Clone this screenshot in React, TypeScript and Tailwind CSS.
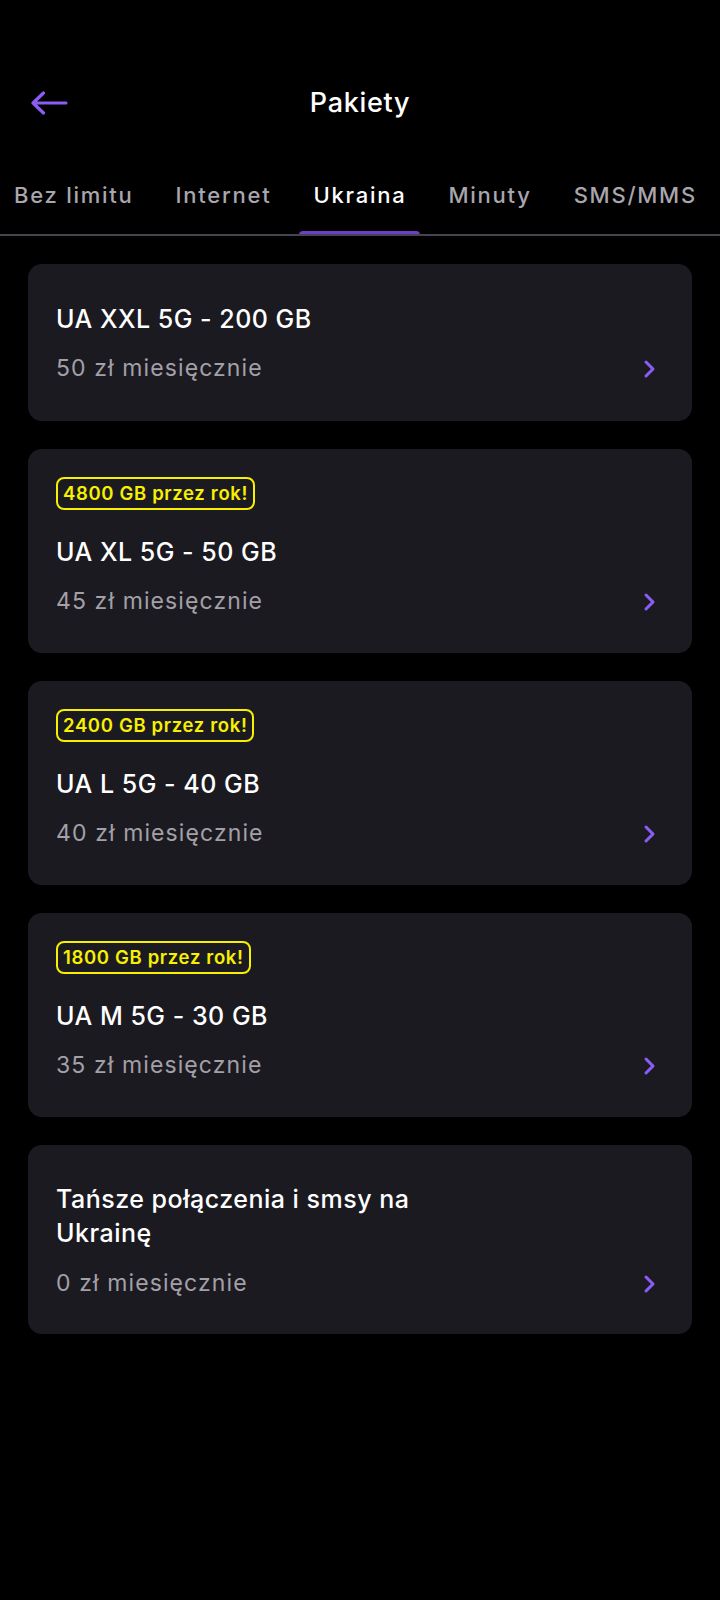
import React from "react";

const tabs = ["Bez limitu", "Internet", "Ukraina", "Minuty", "SMS/MMS"];

type Pkg = { badge?: string; title: React.ReactNode; price: string };

const pkgs: Pkg[] = [
  { title: "UA XXL 5G - 200 GB", price: "50 zł miesięcznie" },
  { badge: "4800 GB przez rok!", title: "UA XL 5G - 50 GB", price: "45 zł miesięcznie" },
  { badge: "2400 GB przez rok!", title: "UA L 5G - 40 GB", price: "40 zł miesięcznie" },
  { badge: "1800 GB przez rok!", title: "UA M 5G - 30 GB", price: "35 zł miesięcznie" },
];

function Chevron() {
  return (
    <svg width="14" height="20" viewBox="0 0 14 20" fill="none" className="shrink-0">
      <path d="M3 3l7 7-7 7" stroke="#8b5cf6" strokeWidth="3" strokeLinecap="round" strokeLinejoin="round" />
    </svg>
  );
}

function Card({ p }: { p: Pkg }) {
  return (
    <div className={`rounded-[14px] bg-[#1c1a21] pl-[28px] pr-[35px] ${p.badge ? "pt-[28px] pb-[37px]" : "pt-[39px] pb-[38px]"}`}>
      {p.badge && (
        <div className="mb-[26px] flex">
          <span className="h-[33px] flex items-center rounded-[8px] border-2 border-[#f7f000] px-[5px] text-[18.5px] font-semibold text-[#f7f000] tracking-[0.65px]">
            {p.badge}
          </span>
        </div>
      )}
      <div className="text-[25px] leading-[32px] font-medium text-white tracking-[0.5px]">{p.title}</div>
      <div className="mt-[19px] flex items-center justify-between">
        <span className="text-[23px] leading-[29px] text-[#a3a0a8] tracking-[1.1px]">{p.price}</span>
        <Chevron />
      </div>
    </div>
  );
}

export default function App() {
  return (
    <div className="min-h-[1600px] w-[720px] bg-black" style={{ fontFamily: "Inter, 'Noto Sans', sans-serif" }}>
      <div className="h-[75px]" />
      <div className="grid h-[56px] grid-cols-[1fr_auto_1fr] items-center">
        <div className="pl-[30px]">
          <svg width="38" height="24" viewBox="0 0 38 24" fill="none">
            <path d="M36 12H3M13.5 2L3 12l10.5 10" stroke="#8b5cf6" strokeWidth="3.2" strokeLinecap="round" strokeLinejoin="round" />
          </svg>
        </div>
        <div className="text-[27px] font-medium text-white tracking-[0.7px]">Pakiety</div>
        <div />
      </div>
      <div className="mt-[49px] flex gap-[14px] overflow-hidden whitespace-nowrap border-b-2 border-[#48444e]">
        {tabs.map((t) => {
          const active = t === "Ukraina";
          return (
            <div key={t} className="relative shrink-0 px-[14px] pb-[24px]">
              <span className={`block text-[22px] leading-[30px] font-medium tracking-[1.75px] ${active ? "text-white" : "text-[#a9a6ae]"}`}>{t}</span>
              {active && <div className="absolute -bottom-[2px] left-0 right-0 h-[5px] rounded-t-[4px] bg-[#6b3fc8]" />}
            </div>
          );
        })}
      </div>
      <div className="mt-[28px] flex flex-col gap-[28px] px-[28px]">
        {pkgs.map((p, i) => (
          <Card key={i} p={p} />
        ))}
        <div className="rounded-[14px] bg-[#1c1a21] pl-[28px] pr-[35px] pt-[37px] pb-[36px]">
          <div className="text-[25px] leading-[34px] font-medium text-white tracking-[0.5px]">
            Tańsze połączenia i smsy na
            <br />
            Ukrainę
          </div>
          <div className="mt-[19px] flex items-center justify-between">
            <span className="text-[23px] leading-[29px] text-[#a3a0a8] tracking-[1.1px]">0 zł miesięcznie</span>
            <Chevron />
          </div>
        </div>
      </div>
    </div>
  );
}
